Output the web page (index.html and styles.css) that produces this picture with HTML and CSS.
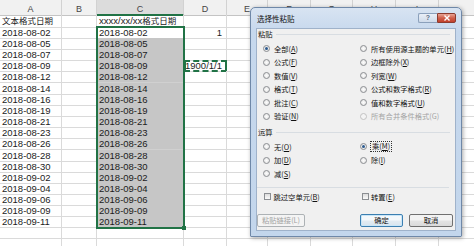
FILE: index.html
```html
<!DOCTYPE html>
<html lang="zh">
<head>
<meta charset="utf-8">
<title>选择性粘贴</title>
<link rel="stylesheet" href="styles.css">
</head>
<body>
<div class="app">
  <div class="sheet">
    <div class="row hdr"><span class="c">A</span><span class="c">B</span><span class="c on">C</span><span class="c">D</span><span class="c">E</span><span class="c">F</span><span class="c">G</span><span class="c">H</span><span class="c">I</span><span class="c"></span></div>
    <div class="row r1"><span class="c"><span class="cjk">文本格式日期</span></span><span class="c"></span><span class="c">xxxx/xx/xx<span class="cjk">格式日期</span></span><span class="c"></span><span class="c"></span><span class="c"></span><span class="c"></span><span class="c"></span><span class="c"></span><span class="c"></span></div>
    <div class="row"><span class="c">2018-08-02</span><span class="c"></span><span class="c">2018-08-02</span><span class="c num">1</span><span class="c"></span><span class="c"></span><span class="c"></span><span class="c"></span><span class="c"></span><span class="c"></span></div>
    <div class="row"><span class="c">2018-08-05</span><span class="c"></span><span class="c sel">2018-08-05</span><span class="c"></span><span class="c"></span><span class="c"></span><span class="c"></span><span class="c"></span><span class="c"></span><span class="c"></span></div>
    <div class="row"><span class="c">2018-08-07</span><span class="c"></span><span class="c sel">2018-08-07</span><span class="c"></span><span class="c"></span><span class="c"></span><span class="c"></span><span class="c"></span><span class="c"></span><span class="c"></span></div>
    <div class="row"><span class="c">2018-08-09</span><span class="c"></span><span class="c sel">2018-08-09</span><span class="c num ants">1900/1/1</span><span class="c"></span><span class="c"></span><span class="c"></span><span class="c"></span><span class="c"></span><span class="c"></span></div>
    <div class="row"><span class="c">2018-08-12</span><span class="c"></span><span class="c sel">2018-08-12</span><span class="c"></span><span class="c"></span><span class="c"></span><span class="c"></span><span class="c"></span><span class="c"></span><span class="c"></span></div>
    <div class="row"><span class="c">2018-08-14</span><span class="c"></span><span class="c sel">2018-08-14</span><span class="c"></span><span class="c"></span><span class="c"></span><span class="c"></span><span class="c"></span><span class="c"></span><span class="c"></span></div>
    <div class="row"><span class="c">2018-08-16</span><span class="c"></span><span class="c sel">2018-08-16</span><span class="c"></span><span class="c"></span><span class="c"></span><span class="c"></span><span class="c"></span><span class="c"></span><span class="c"></span></div>
    <div class="row"><span class="c">2018-08-19</span><span class="c"></span><span class="c sel">2018-08-19</span><span class="c"></span><span class="c"></span><span class="c"></span><span class="c"></span><span class="c"></span><span class="c"></span><span class="c"></span></div>
    <div class="row"><span class="c">2018-08-21</span><span class="c"></span><span class="c sel">2018-08-21</span><span class="c"></span><span class="c"></span><span class="c"></span><span class="c"></span><span class="c"></span><span class="c"></span><span class="c"></span></div>
    <div class="row"><span class="c">2018-08-23</span><span class="c"></span><span class="c sel">2018-08-23</span><span class="c"></span><span class="c"></span><span class="c"></span><span class="c"></span><span class="c"></span><span class="c"></span><span class="c"></span></div>
    <div class="row"><span class="c">2018-08-26</span><span class="c"></span><span class="c sel">2018-08-26</span><span class="c"></span><span class="c"></span><span class="c"></span><span class="c"></span><span class="c"></span><span class="c"></span><span class="c"></span></div>
    <div class="row"><span class="c">2018-08-28</span><span class="c"></span><span class="c sel">2018-08-28</span><span class="c"></span><span class="c"></span><span class="c"></span><span class="c"></span><span class="c"></span><span class="c"></span><span class="c"></span></div>
    <div class="row"><span class="c">2018-08-30</span><span class="c"></span><span class="c sel">2018-08-30</span><span class="c"></span><span class="c"></span><span class="c"></span><span class="c"></span><span class="c"></span><span class="c"></span><span class="c"></span></div>
    <div class="row"><span class="c">2018-09-02</span><span class="c"></span><span class="c sel">2018-09-02</span><span class="c"></span><span class="c"></span><span class="c"></span><span class="c"></span><span class="c"></span><span class="c"></span><span class="c"></span></div>
    <div class="row"><span class="c">2018-09-04</span><span class="c"></span><span class="c sel">2018-09-04</span><span class="c"></span><span class="c"></span><span class="c"></span><span class="c"></span><span class="c"></span><span class="c"></span><span class="c"></span></div>
    <div class="row"><span class="c">2018-09-06</span><span class="c"></span><span class="c sel">2018-09-06</span><span class="c"></span><span class="c"></span><span class="c"></span><span class="c"></span><span class="c"></span><span class="c"></span><span class="c"></span></div>
    <div class="row"><span class="c">2018-09-09</span><span class="c"></span><span class="c sel">2018-09-09</span><span class="c"></span><span class="c"></span><span class="c"></span><span class="c"></span><span class="c"></span><span class="c"></span><span class="c"></span></div>
    <div class="row"><span class="c">2018-09-11</span><span class="c"></span><span class="c sel">2018-09-11</span><span class="c"></span><span class="c"></span><span class="c"></span><span class="c"></span><span class="c"></span><span class="c"></span><span class="c"></span></div>
    <div class="row"><span class="c"></span><span class="c"></span><span class="c"></span><span class="c"></span><span class="c"></span><span class="c"></span><span class="c"></span><span class="c"></span><span class="c"></span><span class="c"></span></div>
    <div class="row"><span class="c"></span><span class="c"></span><span class="c"></span><span class="c"></span><span class="c"></span><span class="c"></span><span class="c"></span><span class="c"></span><span class="c"></span><span class="c"></span></div>
    <div class="selection"><span class="handle"></span></div>
  </div>

  <div class="dialog">
    <div class="titlebar">
      <span class="title">选择性粘贴</span>
      <div class="caps">
        <span class="cap help">?</span>
        <span class="cap close"><svg width="8" height="6" viewBox="0 0 8 6"><path d="M1.5 0.5 L6.5 5.5 M6.5 0.5 L1.5 5.5" stroke="#fff" stroke-width="1.4" fill="none"/></svg></span>
      </div>
    </div>
    <div class="body">
      <div class="gt">粘贴</div>
      <div class="opts">
        <span class="opt"><span class="radio on"></span>全部(<u>A</u>)</span>
        <span class="opt"><span class="radio"></span>所有使用源主题的单元(<u>H</u>)</span>
        <span class="opt"><span class="radio"></span>公式(<u>F</u>)</span>
        <span class="opt"><span class="radio"></span>边框除外(<u>X</u>)</span>
        <span class="opt"><span class="radio"></span>数值(<u>V</u>)</span>
        <span class="opt"><span class="radio"></span>列宽(<u>W</u>)</span>
        <span class="opt"><span class="radio"></span>格式(<u>T</u>)</span>
        <span class="opt"><span class="radio"></span>公式和数字格式(<u>R</u>)</span>
        <span class="opt"><span class="radio"></span>批注(<u>C</u>)</span>
        <span class="opt"><span class="radio"></span>值和数字格式(<u>U</u>)</span>
        <span class="opt"><span class="radio"></span>验证(<u>N</u>)</span>
        <span class="opt disabled"><span class="radio"></span>所有合并条件格式(G)</span>
      </div>
      <div class="gt gt2">运算</div>
      <div class="opts ops">
        <span class="opt"><span class="radio"></span>无(<u>O</u>)</span>
        <span class="opt"><span class="radio on"></span><span class="focus">乘(<u>M</u>)</span></span>
        <span class="opt"><span class="radio"></span>加(<u>D</u>)</span>
        <span class="opt"><span class="radio"></span>除(<u>I</u>)</span>
        <span class="opt"><span class="radio"></span>减(<u>S</u>)</span>
      </div>
      <div class="sep"></div>
      <div class="checks">
        <span class="opt"><span class="box"></span>跳过空单元(<u>B</u>)</span>
        <span class="opt"><span class="box"></span>转置(<u>E</u>)</span>
      </div>
      <div class="buttons">
        <span class="btn link">粘贴链接(L)</span>
        <span class="btn ok">确定</span>
        <span class="btn cancel">取消</span>
      </div>
    </div>
  </div>
</div>
</body>
</html>
```

FILE: styles.css
```css
html, body {
  margin: 0;
  padding: 0;
  background: #fff;
  overflow: hidden;
}

.app {
  position: relative;
  width: 474px;
  height: 246px;
  overflow: hidden;
  font-family: "Liberation Sans", "Noto Sans CJK SC", sans-serif;
}

/* ---------- spreadsheet ---------- */
.sheet {
  position: relative;
  width: 482px;
}

.row {
  display: grid;
  grid-template-columns: 62px 35px 87px 43px 41px 43px 42px 43px 43px 43px;
  height: 11.17px;
}

.c {
  box-sizing: border-box;
  border-right: 1px solid #dadada;
  border-bottom: 1px solid #dadada;
  font-size: 9.5px;
  line-height: 11px;
  padding-left: 2px;
  white-space: nowrap;
  color: #1c1c1c;
}

.hdr {
  height: 15px;
  background: #f1f1f1;
}

.hdr .c {
  text-align: center;
  padding: 4px 0 0;
  line-height: 10px;
  font-size: 9px;
  color: #454545;
  border-right-color: #d2d2d2;
  border-bottom-color: #c4c4c4;
}

.hdr .c.on {
  background: #dcdcdc;
  border-bottom: 2px solid #217346;
}

.r1 {
  height: 11.83px;
}

.r1 .c {
  line-height: 12px;
}

.cjk {
  font-size: 8.5px;
}

.sel {
  background: #c6c6c6;
  border-bottom-color: #d0d0d0;
}

.num {
  text-align: right;
  padding: 0 4px 0 0;
}

.ants {
  outline: 2px dashed #217346;
  outline-offset: -2px;
}

.selection {
  position: absolute;
  left: 96px;
  top: 25.5px;
  width: 88.5px;
  height: 203px;
  box-sizing: border-box;
  border: 2px solid #217346;
  pointer-events: none;
}

.handle {
  position: absolute;
  right: -3.5px;
  bottom: -3.5px;
  width: 4px;
  height: 4px;
  background: #217346;
}

/* ---------- dialog ---------- */
.dialog {
  position: absolute;
  left: 250px;
  top: 7px;
  width: 212px;
  height: 230px;
  box-sizing: border-box;
  border: 1px solid #6f88a8;
  border-radius: 5px 5px 1px 1px;
  background: linear-gradient(#d8e4f2, #c6d8ed 24px, #c3d6ec);
  padding: 0 5px 5px;
  display: flex;
  flex-direction: column;
  box-shadow: 1px 1px 4px rgba(0, 0, 0, 0.35);
  font-family: "Noto Sans CJK SC", sans-serif;
  font-size: 7.3px;
  color: #111;
}

.titlebar {
  height: 20px;
  display: flex;
  align-items: flex-start;
  justify-content: space-between;
}

.title {
  padding: 6px 0 0 1px;
  line-height: 10px;
  font-size: 7.5px;
  color: #111;
}

.caps {
  display: flex;
  margin-top: 5px;
}

.cap {
  width: 19px;
  height: 10px;
  box-sizing: border-box;
  display: flex;
  align-items: center;
  justify-content: center;
}

.help {
  border: 1px solid #8ba0bb;
  border-right: none;
  border-radius: 2px 0 0 2px;
  background: linear-gradient(#e9eff7, #cfdbea);
  color: #5d6f87;
  font-family: "Liberation Sans", sans-serif;
  font-weight: bold;
  font-size: 7px;
  line-height: 8px;
}

.close {
  border: 1px solid #8b3b2f;
  border-radius: 0 2px 2px 0;
  background: linear-gradient(#e9a596, #d0604c 50%, #c2402b);
}

.body {
  flex: 1;
  background: #f0f0f0;
  border: 1px solid #9fb2ca;
  display: flex;
  flex-direction: column;
  padding: 0 2px 0 0;
}

.gt {
  display: flex;
  align-items: center;
  height: 11px;
  line-height: 11px;
  padding-left: 1px;
}

.gt::after {
  content: "";
  flex: 1;
  border-top: 1px solid #d8dde2;
  margin: 0 3px 0 3px;
}

.gt2 {
  margin-top: 3.5px;
}

.opts {
  display: grid;
  grid-template-columns: 97px 1fr;
  grid-auto-rows: 13.5px;
  margin: 2px 0 0 5.5px;
}

.ops {
  margin-top: 2.5px;
}

.opt {
  display: flex;
  align-items: center;
  white-space: nowrap;
}

.radio {
  position: relative;
  flex: none;
  width: 7px;
  height: 7px;
  box-sizing: border-box;
  border: 1px solid #8b8e92;
  border-radius: 50%;
  background: radial-gradient(circle, #fdfdfd, #e0e0e0);
  margin-right: 4.5px;
}

.radio.on::after {
  content: "";
  position: absolute;
  left: 1px;
  top: 1px;
  width: 3px;
  height: 3px;
  border-radius: 50%;
  background: #2c5a8e;
}

.disabled {
  color: #a4a4a4;
}

.disabled .radio {
  border-color: #c2c2c2;
  background: #f4f4f4;
}

.focus {
  outline: 1px dotted #333;
  outline-offset: 0;
  padding: 0 1px;
  line-height: 9px;
}

.sep {
  margin: 6px 4px 0 0;
  border-top: 1px solid #d8dde2;
}

.checks {
  display: grid;
  grid-template-columns: 97.5px 1fr;
  height: 13.5px;
  margin: 2.5px 0 0 7px;
}

.box {
  flex: none;
  width: 7px;
  height: 7px;
  box-sizing: border-box;
  border: 1px solid #8b8e92;
  background: linear-gradient(#dcdcdc, #fafafa);
  margin-right: 2.5px;
}

.buttons {
  display: flex;
  margin-top: 10px;
}

.btn {
  height: 13px;
  box-sizing: border-box;
  border: 1px solid #707070;
  border-radius: 2px;
  background: linear-gradient(#f3f3f3 45%, #e3e3e3 55%, #dadada);
  display: flex;
  align-items: center;
  justify-content: center;
  white-space: nowrap;
}

.link {
  width: 48px;
  color: #a2a2a2;
  border-color: #adb2b5;
  background: #f4f4f4;
}

.ok {
  width: 43px;
  margin-left: auto;
  border-color: #3c7fb1;
  background: linear-gradient(#f4f8fb 45%, #e2ebf2 55%, #d8e4ee);
  box-shadow: inset 0 0 0 1px #c9e6f8;
}

.cancel {
  width: 44px;
  margin-left: 6px;
}
```
